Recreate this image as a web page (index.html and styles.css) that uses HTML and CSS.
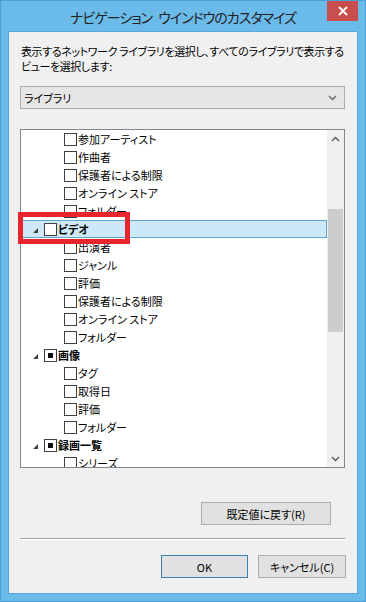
FILE: index.html
```html
<!DOCTYPE html>
<html lang="ja">
<head>
<meta charset="utf-8">
<link rel="stylesheet" href="styles.css">
</head>
<body>
<div class="window">
  <div class="titlebar">
    <span class="title">ナビゲーション ウインドウのカスタマイズ</span>
    <div class="close"><svg width="10" height="10" viewBox="0 0 10 10"><path d="M1 1L9 9M9 1L1 9" stroke="#fff" stroke-width="1.8"/></svg></div>
  </div>
  <div class="client">
    <p class="desc"><span class="line">表示するネットワーク ライブラリを選択し、すべてのライブラリで表示する</span><span class="line">ビューを選択します:</span></p>
    <div class="select">
      <span>ライブラリ</span>
      <svg width="9" height="6" viewBox="0 0 9 6"><path d="M1 1L4.5 4.5L8 1" fill="none" stroke="#707070" stroke-width="1.5"/></svg>
    </div>
    <div class="tree">
      <div class="rows">
        <div class="row child"><span class="cb"></span><span>参加アーティスト</span></div>
        <div class="row child"><span class="cb"></span><span>作曲者</span></div>
        <div class="row child"><span class="cb"></span><span>保護者による制限</span></div>
        <div class="row child"><span class="cb"></span><span>オンライン ストア</span></div>
        <div class="row child"><span class="cb"></span><span>フォルダー</span></div>
        <div class="row top selected"><span class="tri"></span><span class="cb"></span><span class="b">ビデオ</span></div>
        <div class="row child"><span class="cb"></span><span>出演者</span></div>
        <div class="row child"><span class="cb"></span><span>ジャンル</span></div>
        <div class="row child"><span class="cb"></span><span>評価</span></div>
        <div class="row child"><span class="cb"></span><span>保護者による制限</span></div>
        <div class="row child"><span class="cb"></span><span>オンライン ストア</span></div>
        <div class="row child"><span class="cb"></span><span>フォルダー</span></div>
        <div class="row top"><span class="tri"></span><span class="cb part"></span><span class="b">画像</span></div>
        <div class="row child"><span class="cb"></span><span>タグ</span></div>
        <div class="row child"><span class="cb"></span><span>取得日</span></div>
        <div class="row child"><span class="cb"></span><span>評価</span></div>
        <div class="row child"><span class="cb"></span><span>フォルダー</span></div>
        <div class="row top"><span class="tri"></span><span class="cb part"></span><span class="b">録画一覧</span></div>
        <div class="row child"><span class="cb"></span><span>シリーズ</span></div>
      </div>
      <div class="scrollbar">
        <div class="sb-btn"><svg width="9" height="6" viewBox="0 0 9 6"><path d="M1 5L4.5 1.5L8 5" fill="none" stroke="#606060" stroke-width="1.5"/></svg></div>
        <div class="sb-track"><div class="sb-thumb"></div></div>
        <div class="sb-btn"><svg width="9" height="6" viewBox="0 0 9 6"><path d="M1 1L4.5 4.5L8 1" fill="none" stroke="#606060" stroke-width="1.5"/></svg></div>
      </div>
    </div>
    <div class="reset-row"><button class="btn reset">既定値に戻す(R)</button></div>
    <div class="sep"></div>
    <div class="actions">
      <button class="btn ok">OK</button>
      <button class="btn cancel">キャンセル(C)</button>
    </div>
  </div>
  <div class="annot"></div>
</div>
</body>
</html>
```
FILE: styles.css
```css
* { box-sizing: border-box; }
html, body { margin: 0; padding: 0; }
body {
  width: 366px;
  height: 602px;
  overflow: hidden;
  font-family: "Noto Sans CJK JP", "Noto Sans", sans-serif;
  font-feature-settings: "palt";
  font-size: 11px;
  color: #000;
}
.window {
  position: relative;
  width: 366px;
  height: 602px;
  background: #6bbbea;
  border: 1px solid #4f9fd6;
  display: flex;
  flex-direction: column;
}
.titlebar {
  height: 30px;
  flex: none;
  display: flex;
  justify-content: center;
  align-items: center;
}
.title {
  font-size: 14px;
  color: #222;
  letter-spacing: -1px;
  word-spacing: 4px;
  margin-top: 2px;
}
.close {
  position: absolute;
  top: 0;
  right: 7px;
  width: 31px;
  height: 20px;
  background: #c94f4f;
  display: flex;
  align-items: center;
  justify-content: center;
}
.client {
  flex: 1;
  margin: 0 7px 7px 7px;
  background: #f0f0f0;
  border: 1px solid #5aa6da;
  padding: 0 12px 0 11px;
  display: flex;
  flex-direction: column;
}
.desc {
  margin: 12px 0 0 1px;
  line-height: 15px;
  letter-spacing: -0.4px;
}
.line {
  display: block;
  height: 15px;
  white-space: nowrap;
}
.select {
  margin-top: 12px;
  height: 23px;
  flex: none;
  background: #e6e6e6;
  border: 1px solid #acacac;
  display: flex;
  align-items: center;
  justify-content: space-between;
  padding: 0 7px 0 3px;
}
.tree {
  margin-top: 20px;
  height: 339px;
  flex: none;
  background: #fff;
  border: 1px solid #828790;
  display: flex;
  overflow: hidden;
}
.rows {
  flex: 1;
  overflow: hidden;
}
.row {
  height: 18px;
  display: flex;
  align-items: center;
  white-space: nowrap;
  line-height: 18px;
}
.row.child { padding-left: 43px; }
.row.top { padding-left: 12px; }
.row.selected {
  background: #cde8f7;
  border: 1px solid #5ea7d2;
  margin-left: 1px;
  padding-left: 10px;
}
.cb {
  width: 13px;
  height: 13px;
  border: 1px solid #404040;
  background: #fff;
  margin-right: 1px;
  flex: none;
  display: flex;
  align-items: center;
  justify-content: center;
}
.cb.part::after {
  content: "";
  width: 5px;
  height: 5px;
  background: #111;
}
.tri {
  width: 0;
  height: 0;
  border-style: solid;
  border-width: 0 0 5px 5px;
  border-color: transparent transparent #444 transparent;
  margin-right: 6px;
  margin-top: 2px;
}
.b { font-weight: bold; }
.scrollbar {
  width: 17px;
  background: #f0f0f0;
  display: flex;
  flex-direction: column;
  flex: none;
}
.sb-btn {
  height: 17px;
  display: flex;
  align-items: center;
  justify-content: center;
}
.sb-track {
  flex: 1;
  padding: 62px 1px 0 1px;
}
.sb-thumb {
  height: 123px;
  background: #cdcdcd;
}
.reset-row {
  display: flex;
  justify-content: flex-end;
  margin-top: 34px;
  padding-right: 14px;
}
.btn {
  font-family: inherit;
  font-size: 11px;
  font-feature-settings: "palt";
  color: #000;
  background: #e1e1e1;
  border: 1px solid #adadad;
  height: 23px;
  padding: 0;
  margin: 0;
}
.reset { width: 130px; }
.sep {
  margin-top: 13px;
  height: 2px;
  border-top: 1px solid #a0a0a0;
  border-bottom: 1px solid #fff;
}
.actions {
  display: flex;
  justify-content: flex-end;
  gap: 10px;
  margin-top: 15px;
  margin-right: -1px;
}
.ok { width: 87px; border-color: #3c7fb1; }
.cancel { width: 88px; }
.annot {
  position: absolute;
  left: 17px;
  top: 211px;
  width: 112px;
  height: 32px;
  border: 5px solid #e8242c;
}
```
